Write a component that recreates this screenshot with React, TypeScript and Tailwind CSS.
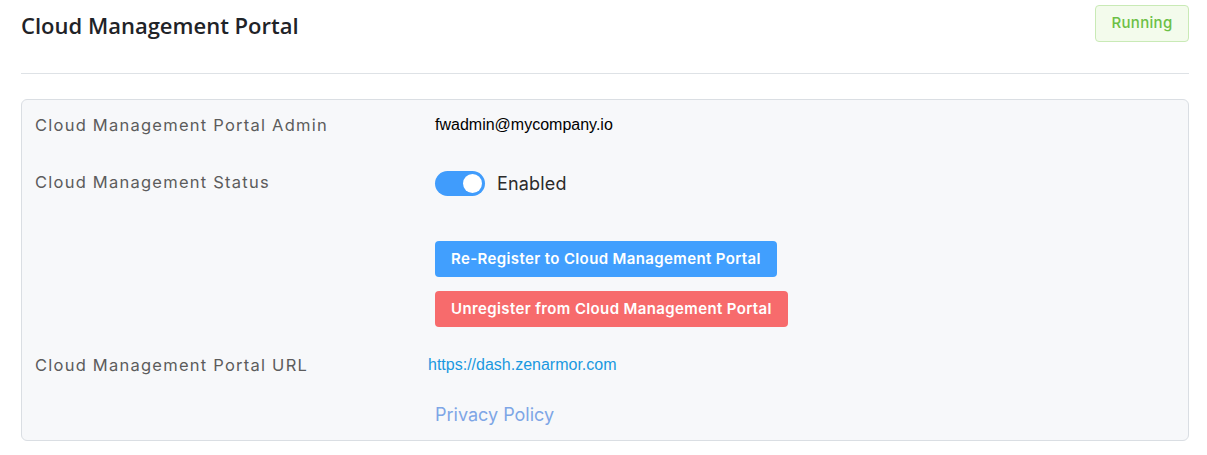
export default function App() {
  const poppins = "font-['Inter','Noto_Sans',sans-serif]";
  return (
    <div className="min-h-screen bg-white pl-[21px] pr-[18px] pt-[5px]">
      <div className="flex items-start justify-between">
        <h1 className="mt-[3px] font-['Open_Sans',sans-serif] text-[22px] font-semibold leading-[34px] text-[#1f2328]">
          Cloud Management Portal
        </h1>
        <span
          className={`flex h-[37px] w-[94px] items-center justify-center rounded-[4px] border border-[#c9eab6] bg-[#f3fbec] text-[15px] font-medium tracking-[0.02em] text-[#6cbf45] ${poppins}`}
        >
          Running
        </span>
      </div>
      <div className="mt-[31px] border-t border-[#dee2e6]" />
      <div
        className={`mt-[25px] rounded-[6px] border border-[#dadee3] bg-[#f7f8fa] pb-[12px] pt-[13px] pl-[13px] ${poppins}`}
      >
        <div className="flex items-center">
          <div className="w-[400px] text-[16.5px] leading-[24px] tracking-[0.075em] text-[#5c5c5c]">
            Cloud Management Portal Admin
          </div>
          <div className="font-['Liberation_Sans',Arial,sans-serif] text-[16px] text-black">
            fwadmin@mycompany.io
          </div>
        </div>
        <div className="mt-[33px] flex items-start">
          <div className="w-[400px] text-[16.5px] leading-[24px] tracking-[0.075em] text-[#5c5c5c]">
            Cloud Management Status
          </div>
          <div className="flex items-center">
            <div className="flex h-[25px] w-[50px] items-center justify-end rounded-full bg-[#409cfc] pr-[3px]">
              <div className="h-[19px] w-[19px] rounded-full bg-white" />
            </div>
            <span className="ml-[12px] text-[18px] tracking-[0.01em] text-[#2b2b2b]">Enabled</span>
          </div>
        </div>
        <div className="ml-[400px] mt-[44px] flex flex-col items-start gap-[14px]">
          <button className="h-[36px] rounded-[4px] bg-[#419ffe] px-[16px] text-[15px] font-semibold tracking-[0.025em] text-white">
            Re-Register to Cloud Management Portal
          </button>
          <button className="h-[36px] rounded-[4px] bg-[#f76b6c] px-[16px] text-[15px] font-semibold tracking-[0.025em] text-white">
            Unregister from Cloud Management Portal
          </button>
        </div>
        <div className="mt-[26px] flex items-center">
          <div className="w-[393px] text-[16.5px] leading-[24px] tracking-[0.075em] text-[#5c5c5c]">
            Cloud Management Portal URL
          </div>
          <a className="font-['Liberation_Sans',Arial,sans-serif] text-[16px] text-[#1a98e0]">
            https://dash.zenarmor.com
          </a>
        </div>
        <div className="ml-[400px] mt-[24px] text-[18px] leading-[27px] text-[#7ea6e6]">
          Privacy Policy
        </div>
      </div>
    </div>
  );
}
